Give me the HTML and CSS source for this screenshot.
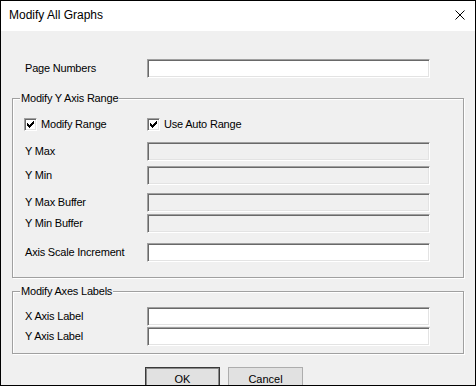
FILE: index.html
```html
<!DOCTYPE html>
<html lang="en">
<head>
   <meta charset="UTF-8">
   <meta name="viewport" content="width=device-width, initial-scale=1.0">
   <title>Modify All Graphs</title>
   <link rel="stylesheet" href="styles.css">
</head>
<body>
   <div class="window">
      <div class="title-bar">
         <span class="title">Modify All Graphs</span>
         <svg class="close" width="10" height="10" viewBox="0 0 10 10">
            <path d="M0.5 0.5 L9.5 9.5 M9.5 0.5 L0.5 9.5" stroke="#000" stroke-width="1" fill="none"/>
         </svg>
      </div>

      <div class="content">
         <div class="row page-row">
            <label>Page Numbers</label>
            <input type="text" class="field">
         </div>

         <div class="group group-range">
            <div class="group-title">Modify Y Axis Range</div>
            <div class="check-row">
               <span class="check-item">
                  <span class="check">
                     <svg width="7" height="7" viewBox="0 0 7 7"><path d="M6 0h1v1h-1z M5 1h2v1h-2z M0 2h1v1h-1z M4 2h3v1h-3z M0 3h2v1h-2z M3 3h3v1h-3z M0 4h5v1h-5z M1 5h3v1h-3z M2 6h1v1h-1z" fill="#000" shape-rendering="crispEdges"/></svg>
                  </span>
                  Modify Range
               </span>
               <span class="check-item">
                  <span class="check">
                     <svg width="7" height="7" viewBox="0 0 7 7"><path d="M6 0h1v1h-1z M5 1h2v1h-2z M0 2h1v1h-1z M4 2h3v1h-3z M0 3h2v1h-2z M3 3h3v1h-3z M0 4h5v1h-5z M1 5h3v1h-3z M2 6h1v1h-1z" fill="#000" shape-rendering="crispEdges"/></svg>
                  </span>
                  Use Auto Range
               </span>
            </div>
            <div class="row y-max">
               <label>Y Max</label>
               <input type="text" class="field" disabled>
            </div>
            <div class="row y-min">
               <label>Y Min</label>
               <input type="text" class="field" disabled>
            </div>
            <div class="row y-max-buf">
               <label>Y Max Buffer</label>
               <input type="text" class="field" disabled>
            </div>
            <div class="row y-min-buf">
               <label>Y Min Buffer</label>
               <input type="text" class="field" disabled>
            </div>
            <div class="row axis-inc">
               <label>Axis Scale Increment</label>
               <input type="text" class="field">
            </div>
         </div>

         <div class="group group-labels">
            <div class="group-title">Modify Axes Labels</div>
            <div class="row x-label">
               <label>X Axis Label</label>
               <input type="text" class="field">
            </div>
            <div class="row y-label">
               <label>Y Axis Label</label>
               <input type="text" class="field">
            </div>
         </div>

         <div class="button-row">
            <button class="btn btn-default">OK</button>
            <button class="btn">Cancel</button>
         </div>
      </div>
   </div>
</body>
</html>
```
FILE: styles.css
```css
* {
   box-sizing: border-box;
}
body {
   margin: 0;
   font-family: "Liberation Sans", Arial, sans-serif;
   font-size: 11px;
   letter-spacing: -0.2px;
   color: #000;
   background: #f0f0f0;
}
.window {
   width: 476px;
   height: 386px;
   border: 1px solid #000;
   background: #f0f0f0;
   overflow: hidden;
}
.title-bar {
   height: 30px;
   background: #fff;
   display: flex;
   justify-content: space-between;
   align-items: flex-start;
   padding: 0 10px 0 8px;
}
.title {
   font-size: 12px;
   letter-spacing: 0;
   line-height: 28px;
}
.close {
   margin-top: 9px;
}
.content {
   padding: 0 11px;
}
.row {
   display: grid;
   grid-template-columns: 122px 283px;
   align-items: center;
   height: 19px;
   padding-left: 12px;
}
.row label {
   line-height: 13px;
   padding-bottom: 1px;
   white-space: nowrap;
}
.page-row {
   margin-top: 28px;
   padding-left: 13px;
}
.field {
   width: 283px;
   height: 19px;
   margin: 0;
   padding: 0 3px;
   font: inherit;
   background: #fff;
   border: 1px solid;
   border-color: #a0a0a0 #fff #fff #a0a0a0;
   box-shadow: inset 1px 1px 0 #696969, inset -1px -1px 0 #e3e3e3;
   outline: none;
}
.field:disabled {
   background: #f0f0f0;
}
.group {
   border: 1px solid #a0a0a0;
   box-shadow: inset 1px 1px 0 #fff, 1px 1px 0 #fff;
}
.group-title {
   display: block;
   width: fit-content;
   height: 13px;
   line-height: 13px;
   margin: -7px 0 0 7px;
   padding: 0 1px;
   background: #f0f0f0;
}
.group-range {
   margin-top: 20px;
   padding-bottom: 15px;
}
.check-row {
   display: grid;
   grid-template-columns: 123px auto;
   margin-top: 13px;
   padding-left: 11px;
   height: 13px;
   line-height: 13px;
}
.check-item {
   display: flex;
   align-items: center;
   gap: 4px;
}
.check {
   width: 13px;
   height: 13px;
   display: flex;
   align-items: center;
   justify-content: center;
   background: #fff;
   border: 1px solid;
   border-color: #a0a0a0 #fff #fff #a0a0a0;
   box-shadow: inset 1px 1px 0 #696969, inset -1px -1px 0 #e3e3e3;
}
.y-max {
   margin-top: 11px;
}
.y-min {
   margin-top: 5px;
}
.y-max-buf {
   margin-top: 8px;
}
.y-min-buf {
   margin-top: 2px;
}
.axis-inc {
   margin-top: 10px;
}
.group-labels {
   margin-top: 13px;
   padding-bottom: 7px;
}
.x-label {
   margin-top: 9px;
}
.y-label {
   margin-top: 1px;
}
.button-row {
   display: flex;
   gap: 8px;
   margin-top: 13px;
   padding-left: 133px;
}
.btn {
   width: 75px;
   height: 23px;
   margin: 0;
   padding: 0;
   font: inherit;
   color: #000;
   background: #e1e1e1;
   border: 1px solid #adadad;
}
.btn-default {
   border: 1px solid #3a3a3a;
   box-shadow: inset 0 0 0 1px #8a8a8a;
}
```
